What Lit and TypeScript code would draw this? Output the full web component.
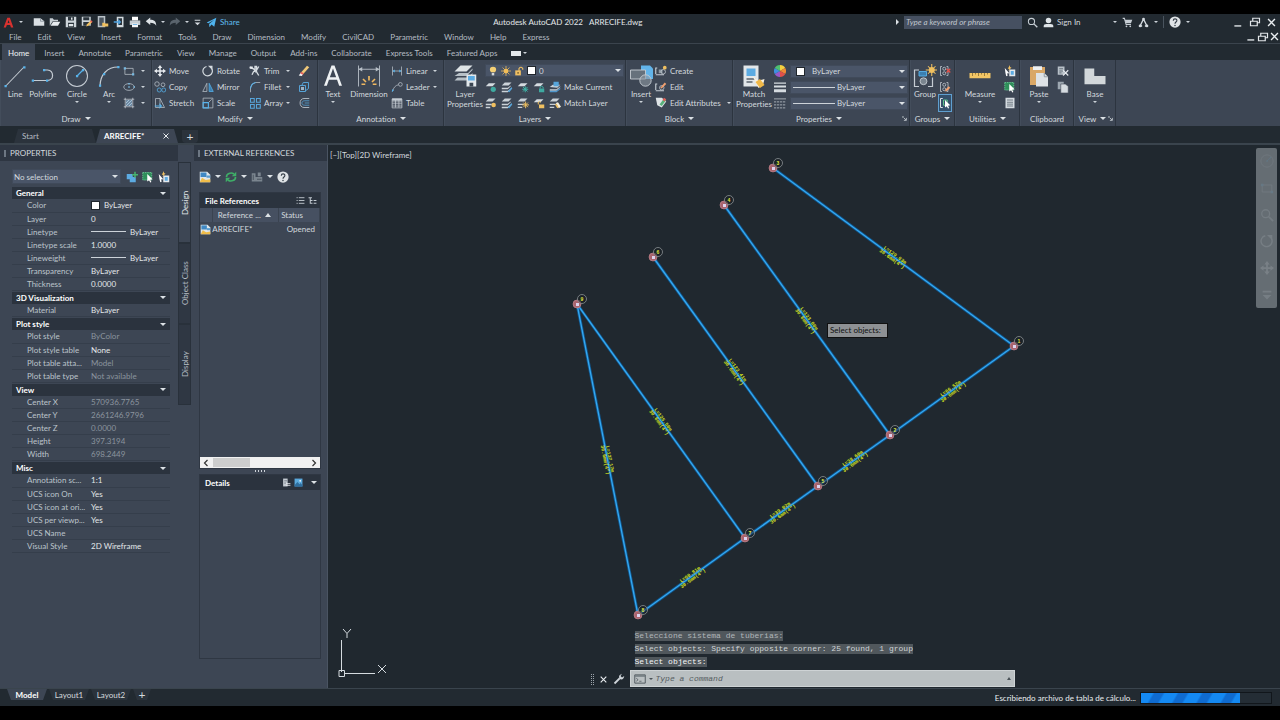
import { LitElement, html, svg, css, nothing, type TemplateResult, type SVGTemplateResult } from "lit";
import { customElement, property } from "lit/decorators.js";

const glyphs: Record<string, SVGTemplateResult> = {
  logo: svg`<path d="M2 14 6.500 2h3.200L14 14h-3l-1-3H6l-1.200 3z M7 8.500h2.200L8 5z" fill="#d8322f" fill-rule="evenodd"/>`,
  blank: svg`<path d="M1 3h9l5 4v6H1z" fill="#d9dfe3"/><path d="M10 3v4h5" fill="none" stroke="#7d8891"/>`,
  open: svg`<path d="M1 13V3h4l1.500 2H12v2H5z" fill="#c9d0d5"/><path d="m2 13 3.500-5.500H15L12 13z" fill="#e7ebee"/>`,
  save: svg`<path d="M1 1h14v14H1z" fill="#cdd4d9"/><path d="M4 1h8v5H4zM4 9h8v6H4z" fill="#2b343c"/><path d="M8 2h2v3H8zM5 10.500h6v3H5z" fill="#dfe5e8"/>`,
  saveas: svg`<path d="M1 1h12v12H1z" fill="#cdd4d9"/><path d="M3 1.500h8v4H3zM3 8h8v5H3z" fill="#2b343c"/><path d="m7 14 1-3 5-5 2 2-5 5z" fill="#f0c060"/><path d="m12 7 1.500-1.500 2 2L14 9z" fill="#e0605a"/>`,
  cloudopen: svg`<path d="M2 1h8v13H2z" fill="#4b555f" stroke="#b9c1c7" stroke-width="2"/><path d="M7 9h3l1 1h4v4H7z" fill="#f0c060"/>`,
  mobile: svg`<path d="M5 1h9v14H5z" fill="#d3dade"/><path d="M7 3h5v9H7z" fill="#2b343c"/><path d="M1 7h6V4l4 4-4 4V9H1z" fill="#4fa3df"/>`,
  print: svg`<path d="M4 1h8v5H4z" fill="#fff"/><path d="M1 6h14v6H1z" fill="#c4ccd2"/><path d="M4 10h8v5H4z" fill="#f4f7f9"/><path d="M5 11h6v1H5z" fill="#4fa3df"/>`,
  undo: svg`<path d="M1 7 7 2v3c5 0 8 2 8 8-2-3-4-4-8-4v3z" fill="#dde2e6"/>`,
  redo: svg`<path d="M15 7 9 2v3c-5 0-8 2-8 8 2-3 4-4 8-4v3z" fill="#59636c"/>`,
  custom: svg`<path d="M3 3h10v2H3zM3 8h10l-5 5z" fill="#d5dbe0"/>`,
  share: svg`<path d="M1 8 15 1l-3 13-4-3-3 4-.500-5L12 4 3.500 9z" fill="#4fb3ee"/>`,
  find: svg`<circle cx="6.500" cy="6.500" r="4.500" fill="none" stroke="#c7ced4" stroke-width="1.500"/><path d="m10 10 5 5" stroke="#c7ced4" stroke-width="2"/>`,
  user: svg`<circle cx="8" cy="5" r="4" fill="#dfe4e8"/><path d="M1 15v-2q0-3 4-3h6q4 0 4 3v2z" fill="#dfe4e8"/>`,
  cart: svg`<path d="M1 2h2.500L6 11h7" fill="none" stroke="#c7ced4" stroke-width="1.500"/><path d="M4 4h11l-2 5H5.500z" fill="#c7ced4"/><circle cx="6.500" cy="13.500" r="1.300" fill="#c7ced4"/><circle cx="12" cy="13.500" r="1.300" fill="#c7ced4"/>`,
  adesk: svg`<path d="M8 3 3 13h3M8 3l5 10h-3" fill="none" stroke="#d5dbe0" stroke-width="2"/><circle cx="8" cy="3" r="2" fill="#d5dbe0"/><circle cx="3" cy="13" r="2" fill="#d5dbe0"/><circle cx="13" cy="13" r="2" fill="#d5dbe0"/>`,
  help: svg`<circle cx="8" cy="8" r="7.500" fill="#dfe3e6"/><path d="M5.700 6.200C5.700 3 10.500 3 10.500 6c0 2-2.500 2-2.500 4.200" fill="none" stroke="#343d47" stroke-width="1.500"/><circle cx="8" cy="12.500" r="1" fill="#343d47"/>`,
  min: svg`<path d="M2 12h10v2H2z" fill="#e3e7ea"/>`,
  rest: svg`<path d="M2 7h9v6H2zM5 7V3h9v6h-3" fill="none" stroke="#e3e7ea" stroke-width="1.600"/>`,
  close: svg`<path d="m3 3 10 10M13 3 3 13" stroke="#e9edf0" stroke-width="2"/>`,
  launch: svg`<path d="M2 2h3M2 2v3M5 5l8 8M14 6v8H6" fill="none" stroke="#cdd3d9" stroke-width="2.500"/>`,
  prev: svg`<path d="M11 2 5 8l6 6" fill="none" stroke="#333" stroke-width="2.400"/>`,
  next: svg`<path d="m5 2 6 6-6 6" fill="none" stroke="#333" stroke-width="2.400"/>`,
  line: svg`<path d="M2 14.500 14 2" stroke="#c5ccd3" stroke-width=".7"/><path d="M1 14h1.500v1.500H1zM13.500 1.500H15V3h-1.500z" fill="#57b2ea"/>`,
  pline: svg`<path d="M1 11h10c4.500 0 4.500-6.500 0-7H9" fill="none" stroke="#c5ccd3" stroke-width=".8"/><path d="M.500 10.300H2v1.500H.500zM8 3.300h1.500v1.500H8zM10 10.300h1.500v1.500H10z" fill="#57b2ea"/>`,
  circle: svg`<circle cx="8" cy="8" r="7" fill="none" stroke="#c5ccd3" stroke-width=".7"/><path d="m8 8 4-4" stroke="#57b2ea" stroke-width=".8"/><path d="M7.300 7.300h1.500v1.500H7.300zM11.300 3.300h1.500v1.500h-1.500z" fill="#57b2ea"/>`,
  arc: svg`<path d="M2 15C2 7 7 2 14 2" fill="none" stroke="#c5ccd3" stroke-width=".8"/><path d="M1.300 13.700h1.500v1.500H1.300zM4 6h1.500v1.500H4zM13.500 1.300H15v1.500h-1.500z" fill="#57b2ea"/>`,
  rect: svg`<path d="M2.500 4.500h11v8h-11z" fill="none" stroke="#b8c0c8"/><path d="M1 3h3v3H1zM12 11h3v3h-3z" fill="#78b8e0"/>`,
  ellipse: svg`<ellipse cx="8" cy="8" rx="7" ry="4.500" fill="none" stroke="#b8c0c8"/><path d="M7 7h2v2H7zM7 2.500h2v2H7zM14 7h2v2h-2z" fill="#78b8e0"/>`,
  hatch: svg`<path d="M3 1v14M13 1v14M1 3h14M1 13h14" stroke="#c5ccd3"/><path d="M4 4h8v8H4z" fill="#6e8aa3"/><path d="m4 8 4-4m-4 8 8-8m-4 8 4-4" stroke="#b9d2e6"/>`,
  move: svg`<path d="M8 0 5 4h2v3H4V5L0 8l4 3V9h3v3H5l3 4 3-4H9V9h3v2l4-3-4-3v2H9V4h2z" fill="#e6eaee"/>`,
  copy: svg`<circle cx="4" cy="4" r="3" fill="none" stroke="#b8c0c8"/><circle cx="12" cy="5" r="2.500" fill="none" stroke="#b8c0c8"/><circle cx="7" cy="12" r="2.700" fill="none" stroke="#57b2ea"/><circle cx="13" cy="12" r="2.700" fill="none" stroke="#57b2ea"/>`,
  stretch: svg`<path d="M2 2h6v12H2zM8 2l6 12H8" fill="none" stroke="#b8c0c8"/><path d="M1 12h9l-3-3m3 3-3 3" fill="none" stroke="#57b2ea" stroke-width="1.400"/>`,
  rotate: svg`<path d="M6 2a6.300 6.300 0 1 0 7 3" fill="none" stroke="#d5dbe0" stroke-width="1.600"/><path d="M8 1h6v6z" fill="#d5dbe0"/>`,
  mirror: svg`<path d="M6.500 3v11H1z" fill="none" stroke="#b8c0c8"/><path d="M9.500 3v11H15z" fill="#3c7fb0" stroke="#57b2ea"/>`,
  scale: svg`<path d="M1.500 1.500h13v13h-13z" fill="none" stroke="#b8c0c8"/><path d="M1.500 7.500h7v7h-7z" fill="none" stroke="#57b2ea" stroke-width="1.500"/><path d="m9 7 4-4" stroke="#b8c0c8"/>`,
  trim: svg`<path d="m1 3 5 2 2 3v-6h2v7l3 5M13 2l-3 5-4 2-2 4" fill="none" stroke="#d5dbe0" stroke-width="1.800"/><path d="M1 2h4v3H1z" fill="#e6eaee"/>`,
  fillet: svg`<path d="M2 15V9q1-6 7-7h6" fill="none" stroke="#b8c0c8"/><path d="M2 10q1-7 7-8" fill="none" stroke="#57b2ea" stroke-width="1.500"/>`,
  array: svg`<path d="M2 2h5v5H2zM10 2h5v5h-5zM2 10h5v5H2zM10 10h5v5h-5z" fill="none" stroke="#57a5da" stroke-width="1.400"/>`,
  erase: svg`<path d="M4 10 12 1l3 2-8 9z" fill="#f0c878"/><path d="m1 14 3-4 3 2-2 2.500z" fill="#f3f4f5"/><path d="m4 9-1 2 3 2 2-2z" fill="#e0605a"/>`,
  explode: svg`<path d="M2 6h8v8H2zM5 6l2-4h7v8l-4 3" fill="none" stroke="#57a5da" stroke-width="1.300"/><path d="M4 8h4v4H4z" fill="#9fb3c4"/>`,
  offset: svg`<path d="M15 2H8C1 2 1 14 8 14h7" fill="none" stroke="#b8c0c8" stroke-width="1.200"/><path d="M15 5H9C4 5 4 11 9 11h6M15 8H9" fill="none" stroke="#57a5da"/>`,
  text: svg`<path d="M2 14.500 7 1h2l5 13.500h-1.900l-1.400-4H5.300l-1.400 4z M5.900 8.800h4.200L8 3z" fill="#eef1f3" fill-rule="evenodd"/>`,
  dim: svg`<path d="M1 1v14M15 1v14M1.500 3.500h13" stroke="#b8c0c8" stroke-width=".6"/><path d="M1 3.500 3.500 2v3zM15 3.500 12.500 2v3z" fill="#b8c0c8"/><path d="m8 8v3m-4-1 2 2m6-2-2 2M3 13.500h2.500m5 0H13" stroke="#f0b860" stroke-width="1.100"/>`,
  linear: svg`<path d="M2 2v12M14 2v12M2 8h12" stroke="#b8c0c8"/><path d="M2 8 5 6v4zM14 8l-3-2v4z" fill="#57b2ea"/>`,
  leader: svg`<path d="M2 14Q4 6 10 5" fill="none" stroke="#b8c0c8"/><circle cx="12.500" cy="4.500" r="2.500" fill="none" stroke="#b8c0c8"/><path d="m1 15 .500-4L4 12z" fill="#57b2ea"/>`,
  table: svg`<path d="M1.500 2.500h13v12h-13zM1.500 6.500h13M1.500 9h13M1.500 12h13M6 4v10M10.500 4v10" fill="none" stroke="#c5ccd3"/><path d="M1.500 2h13v3h-13z" fill="#c5ccd3"/>`,
  layers: svg`<path d="m1 5 4-4h8l-4 4z" fill="#dfe4e7"/><path d="m1 8 3-2h6l3-3v1L9 8zM1 11l2-2h7l3-3v1l-4 4z" fill="#b7c0c7"/><path d="M9 7h6.500v8H9z" fill="#e3e8ec"/><path d="M10 8h4.500v3H10z" fill="#5cabe2"/><path d="M11 12.500h2.500V15H11z" fill="#3b4653"/>`,
  bulb: svg`<path d="M8 1C2 1 2 7 5 10h6c3-3 3-9-3-9z" fill="#f3cf75"/><path d="M6 11h4v4H6z" fill="#d3d7da"/>`,
  sun: svg`<circle cx="8" cy="8" r="3.800" fill="#f1bd58"/><path d="M8 0v16M0 8h16M2.500 2.500l11 11M13.500 2.500l-11 11" stroke="#f1bd58" stroke-width="1.200"/>`,
  lock: svg`<path d="M8 8V4q3-4 6 0v2" fill="none" stroke="#efbf62" stroke-width="1.800"/><path d="M2 7h9v8H2z" fill="#efbf62"/><path d="M5.500 9.500h2v3h-2z" fill="#6b562a"/>`,
  lay1: svg`<path d="m1 7 4-4h9l-4 4z" fill="#d5dbe0"/><circle cx="11" cy="11" r="3.500" fill="#3fa9a0"/>`,
  lay2: svg`<path d="m1 6 4-4h9l-4 4zM1 9h8l4-3v1l-4 4H1zM1 13h8l4-3v1l-4 4H1z" fill="#cbd2d8"/><path d="m9 14 5-6 1 2-4 5z" fill="#57a5da"/>`,
  lay3: svg`<path d="m1 7 4-4h9l-4 4z" fill="#d5dbe0"/><path d="M11 7v8M7 11h8M8 8l6 6M14 8l-6 6" stroke="#3fb3a8" stroke-width="1.300"/>`,
  lay4: svg`<path d="m1 7 4-4h9l-4 4z" fill="#d5dbe0"/><path d="M8 10h7v5H8z" fill="#3fa9a0"/><path d="M9.500 10V8q2-2 4 0v2" fill="none" stroke="#3fa9a0" stroke-width="1.300"/>`,
  current: svg`<path d="m1 8 4-3h10l-4 4zM1 11h9l5-4v1l-5 5H1z" fill="#cbd2d8"/><path d="M6 1h7v6H6z" fill="#57a5da"/><path d="M1 13h9l5-4v2l-5 4H1z" fill="#4f97cc"/>`,
  lay5: svg`<path d="m1 6 4-4h9l-4 4zM1 9h8v2H1zM1 13h6v2H1z" fill="#cbd2d8"/><circle cx="11.500" cy="10.500" r="3" fill="#f0c060"/>`,
  lay6: svg`<path d="m1 6 4-4h9l-4 4zM1 9h8v1.500H1zM1 13h6v1.500H1z" fill="#cbd2d8"/><path d="M11.500 6v9M7 10.500h9M8.500 7.500l6 6M14.500 7.500l-6 6" stroke="#f0c060" stroke-width="1.300"/>`,
  lay7: svg`<path d="m1 7 4-4h9l-4 4z" fill="#d5dbe0"/><path d="M8 10h7v5H8z" fill="#f0c060"/><path d="M7 10V7q2-2 3.500 0" fill="none" stroke="#f0c060" stroke-width="1.300"/>`,
  match: svg`<path d="m1 6 4-4h9l-4 4zM1 9h8v1.500H1zM1 13h6v1.500H1z" fill="#cbd2d8"/><path d="m9 8 3-1 4 6-3 2z" fill="#f4eedd"/><path d="m8 10 2-1 3 5-2 1z" fill="#f0c060"/>`,
  insert: svg`<path d="M8 1h6l2 2v7H8z" fill="#62b4ea"/><path d="M1 4h10v6H1z" fill="#66717c" stroke="#c5ccd3" stroke-width=".6"/><circle cx="11" cy="11" r="3.800" fill="#8f9aa4" fill-opacity=".6" stroke="#c5ccd3" stroke-width=".6"/>`,
  create: svg`<path d="M1 12V4h2m-2 9h11" fill="none" stroke="#c5ccd3" stroke-width="1.500"/><path d="M5 6h5v5H5z" fill="#8d98a2"/><circle cx="11" cy="9" r="3" fill="none" stroke="#c5ccd3"/><circle cx="13" cy="3.500" r="2.500" fill="#f0c060"/>`,
  bedit: svg`<path d="M1 12V4h2m-2 9h11" fill="none" stroke="#c5ccd3" stroke-width="1.500"/><circle cx="9" cy="9" r="3" fill="none" stroke="#c5ccd3"/><path d="m7 9 6-7 2 2-6 6z" fill="#f0a070"/>`,
  attr: svg`<path d="M1 1h8l6 5-6 8-6-3z" fill="#dfe4e7"/><path d="m6 10 6-8 3 2-6 8z" fill="#57b27a"/><path d="m10 4 2-3 3 2-2 3z" fill="#e0605a"/>`,
  matchp: svg`<path d="M1 1h10v14H1z" fill="#e2e6e9"/><path d="M3 3h6v5H3z" fill="#5cabe2"/><path d="M3 10h6M3 12h4" stroke="#59636c"/><path d="m7 8 4 3 4-1-1 4-3 2z" fill="#f6f0e2"/><path d="m9 12 3-2 3 4-3 2z" fill="#f0b848"/>`,
  wheel: svg`<path d="M8 8V0a8 8 0 0 1 7 4z" fill="#f4d03f"/><path d="m8 8 7-4a8 8 0 0 1 0 8z" fill="#f08a34"/><path d="m8 8 7 4a8 8 0 0 1-7 4z" fill="#e0504a"/><path d="M8 8v8a8 8 0 0 1-7-4z" fill="#9a58c8"/><path d="m8 8-7 4a8 8 0 0 1 0-8z" fill="#3f8fe0"/><path d="M8 8 1 4a8 8 0 0 1 7-4z" fill="#4fc070"/>`,
  weights: svg`<path d="M0 2h16v1.500H0zM0 6h16v2.500H0zM0 11h16v4H0z" fill="#d5dbe0"/>`,
  types: svg`<path d="M0 2.500h16" stroke="#c5ccd3"/><path d="M0 6.500h16M0 10.500h16M0 14.500h16" stroke="#c5ccd3" stroke-dasharray="3 1"/>`,
  group: svg`<path d="M4 4H1v11h3M10 15h3V9" fill="none" stroke="#c5ccd3" stroke-width=".8"/><path d="M4 5h5v3H4z" fill="#3c7fb0" stroke="#57b2ea" stroke-width=".6"/><circle cx="7" cy="11.500" r="2.300" fill="#7a858f" stroke="#c5ccd3" stroke-width=".6"/><circle cx="12.500" cy="4" r="2" fill="#f0c060"/><path d="M12.500 0v8M8.500 4h8M10 1.500l5 5M15 1.500l-5 5" stroke="#f0c060" stroke-width=".7"/>`,
  ungroup: svg`<path d="M4 2H2v12h2M10 2h2v12h-2" fill="none" stroke="#c5ccd3"/><circle cx="7" cy="5" r="2" fill="none" stroke="#c5ccd3"/><circle cx="7" cy="11" r="2" fill="none" stroke="#c5ccd3"/><path d="m10 5 5 5m0-5-5 5" stroke="#e0504a" stroke-width="1.800"/>`,
  gedit: svg`<path d="M4 2H2v12h2M10 2h2v12h-2" fill="none" stroke="#c5ccd3"/><circle cx="7" cy="5" r="2" fill="none" stroke="#c5ccd3"/><circle cx="7" cy="11" r="2" fill="none" stroke="#c5ccd3"/><path d="m8 14 1-3 4-4 2 2-4 4z" fill="#f0a070"/>`,
  gsel: svg`<path d="M5 2H2v12h3" fill="none" stroke="#e3e7ea" stroke-width="1.300"/><path d="M6 4h5v7H6z" fill="none" stroke="#5fc48a" stroke-width="1.300"/><path d="m8 4 7 7-3 .500 1.500 3-1.500.700-1.500-3L8 14z" fill="#fff"/>`,
  measure: svg`<path d="M1 6h14v3.500H1z" fill="#f2c565"/><path d="M3 6v2M5 6v1M7 6v2M9 6v1M11 6v2M13 6v1" stroke="#7d6430" stroke-width=".5"/>`,
  qsel: svg`<path d="M7 6h8v9H7z" fill="#e3e8ec"/><path d="M9 8h4v5H9z" fill="#5cabe2"/><path d="m1 4 6 7-3 .300L5 14l-2 1-1-4z" fill="#fff"/><path d="m8 0-3 5h2L6 8l4-5H8z" fill="#f0c060"/>`,
  selall: svg`<path d="M1 2h12v10H1z" fill="#2f8f5a" stroke="#6fd39b" stroke-dasharray="2 1"/><path d="m7 4 7 7-3 .500 1.500 3-1.500.700-1.500-3L7 14z" fill="#fff"/>`,
  calc: svg`<path d="M2 1h12v14H2z" fill="#d5dbe0"/><path d="M4 4h8M4 7h8M4 9.500h8M4 12h8" stroke="#525d68"/>`,
  paste: svg`<path d="M2 2h10v12H2z" fill="#d9a766"/><path d="M4 1.500h6v2.500H4z" fill="#eef1f3"/><path d="M6 6h5.500L14 8.500V15H6z" fill="#dde2e6"/><path d="M11.500 6v2.500H14" fill="none" stroke="#8a949d" stroke-width=".6"/>`,
  cut: svg`<path d="M1 2h9v11H1z" fill="#b8c0c8"/><path d="M3 5h5M3 8h5M3 10.500h3" stroke="#4a5562"/><path d="m8 7 7 7m0-7-7 7" stroke="#e6eaee" stroke-width="1.500"/>`,
  pages: svg`<path d="M1 1h8v10H1z" fill="#9da7b0"/><path d="M5 4h6l4 3v9H5z" fill="#d5dbe0" stroke="#3c4552" stroke-width=".8"/>`,
  base: svg`<path d="M1 3h6.500v5H15v5.500H1z" fill="#d2d7da"/>`,
  addsel: svg`<path d="M1 4h8v7H1zM5 8h8v7H5z" fill="#5cabe2"/><path d="M11 1h2v3h3v2h-3v3h-2V6H8V4h3z" fill="#47b56f"/>`,
  dwg: svg`<path d="M1 1h10l4 4v10H1z" fill="#dfe6ea"/><path d="M2 2h8v6H2z" fill="#3f88c4"/><path d="M10 6h5v3h-5z" fill="#5b9dd0"/><path d="M1 15 4 9l5 3 6-1v4z" fill="#f0bd4a"/>`,
  sync: svg`<path d="M2 8a6 5 0 0 1 10-4M14 8a6 5 0 0 1-10 4" fill="none" stroke="#3fae68" stroke-width="2.200"/><path d="M15 1v6H9zM1 15V9h6z" fill="#3fae68"/>`,
  path: svg`<path d="M1 3h5v11H1zM6 8h9v6H6zM9 2h4v5H9z" fill="#7b858f"/><path d="M3 5v7M8 11h6" stroke="#3c4552"/>`,
  list: svg`<path d="M1 3h2M5 3h10M1 8h2M5 8h10M1 13h2M5 13h10" stroke="#c5ccd3" stroke-width="1.600"/>`,
  tree: svg`<path d="M1 3h6M4 3v10h4M4 8h4M10 8h5M10 13h5" stroke="#c5ccd3" stroke-width="1.800" fill="none"/>`,
  detail: svg`<path d="M2 1h8v14H2z" fill="#c5ccd3"/><path d="M4 5h5M4 9h3" stroke="#3c4552"/><path d="M7 10h8M7 13h8" stroke="#e6eaee" stroke-width="1.500"/>`,
  preview: svg`<path d="M1 1h14v14H1z" fill="#5aa9dc"/><path d="m1 13 5-6 4 4 2-2 3 4v2H1z" fill="#2f6f9f"/><circle cx="11" cy="5" r="1.500" fill="#fff"/>`,
  wrench: svg`<path d="m2 14 7-7" stroke="#cfd5da" stroke-width="2.400"/><path d="M9 8Q6 3 12 1l-2 3 2 2 3-2q-1 6-6 4z" fill="#cfd5da"/>`,
  prompt: svg`<path d="M1 2.500h14v11H1z" fill="none" stroke="#4a5258" stroke-width="1.200"/><path d="M1 3h14v2H1z" fill="#6f787e"/><path d="m3 7 2.500 2L3 11M7 11h3" fill="none" stroke="#4a5258"/>`,
};

const icon = (name: string, size = 12) =>
  html`<svg class="icon" width=${size} height=${size} viewBox="0 0 16 16" aria-hidden="true">${glyphs[name]}</svg>`;
const caret = html`<span class="caret"></span>`;
const dot = html`<span class="caret small"></span>`;

const shared = css`
  :host, * { box-sizing: border-box; }
  button, select, input { font: inherit; color: inherit; background: none; border: 0; padding: 0; margin: 0; border-radius: 0; outline: none; }
  button { display: flex; align-items: center; white-space: nowrap; text-align: left; }
  select { appearance: none; cursor: pointer; }
  .icon { display: block; flex: none; }
  .caret { flex: none; display: block; width: 0; height: 0; border: 3px solid transparent; border-top: 3px solid #dce1e5; border-bottom: 0; }
  .caret.small { border-width: 2px 2px 0; border-top-color: #cdd3d9; }
`;

@customElement("ribbon-panel")
class RibbonPanel extends LitElement {
  @property() label = "";
  @property({ type: Boolean }) plain = false;
  @property({ type: Boolean }) launcher = false;
  static styles = [shared, css`
    :host { display: flex; flex-direction: column; flex: none; padding-top: 3px; border-right: 1px solid #2c343f; border-left: 1px solid #434d5b; }
    .body { height: 48px; display: flex; }
    .title { display: flex; align-items: center; height: 15px; padding: 0 2px; }
    .name { flex: 1; display: flex; align-items: center; justify-content: center; gap: 4px; font-variant-ligatures: none; }
  `];
  render() {
    return html`<div class="body"><slot></slot></div>
      <div class="title"><button class="name">${this.label}${this.plain ? nothing : caret}</button>
      ${this.launcher ? html`<button aria-label="${this.label} settings">${icon("launch", 5)}</button>` : nothing}</div>`;
  }
}

@customElement("pipe-drawing")
class PipeDrawing extends LitElement {
  static styles = css`
    :host { display: block; }
    svg { display: block; width: 100%; min-width: 952px; height: 543px; }
    .glow { stroke: #0b66ad; stroke-width: 3; opacity: .75; }
    .pipe { stroke: #35a9f2; stroke-width: 1.3; }
    .tag { font: bold 5px "Liberation Mono", monospace; fill: #d4e021; text-anchor: middle; }
    .num { font: bold 5px "Liberation Sans", sans-serif; fill: #e4ea3c; text-anchor: middle; }
    .ring { fill: #151b1f; stroke: #8b9296; stroke-width: .8; }
    .node { fill: #a9646e; stroke: #c98b93; stroke-width: .6; }
  `;
  nodes = [
    [773, 168, "3"], [724, 205, "4"], [653, 257, "6"], [577, 304, "9"], [1014, 346, "1"],
    [890, 435, "2"], [818, 486, "5"], [745, 538, "7"], [638, 615, "8"],
  ] as [number, number, string][];
  pipes = [
    [0, 4, "L=129.93m"], [1, 5, "L=123.00m"], [2, 6, "L=122.41m"], [3, 7, "L=125.50m"], [3, 8, "L=137.17m"],
    [8, 7, "L=60.81m"], [7, 6, "L=39.02m"], [6, 5, "L=38.60m"], [5, 4, "L=66.52m"],
  ] as [number, number, string][];
  render() {
    const seg = this.pipes.map(([a, b, t]) => {
      const [x1, y1] = this.nodes[a], [x2, y2] = this.nodes[b];
      return { x1, y1, x2, y2, t, mx: (x1 + x2) / 2, my: (y1 + y2) / 2, deg: (Math.atan2(y2 - y1, x2 - x1) * 180) / Math.PI };
    });
    return html`<svg viewBox="328 145 952 543" preserveAspectRatio="xMinYMin meet" role="img" aria-label="Pipe network">
      ${seg.map((s) => svg`<line class="glow" x1=${s.x1} y1=${s.y1} x2=${s.x2} y2=${s.y2} /><line class="pipe" x1=${s.x1} y1=${s.y1} x2=${s.x2} y2=${s.y2} />`)}
      ${seg.map((s) => svg`<g transform="translate(${s.mx} ${s.my}) rotate(${s.deg})"><text class="tag" y="-1">${s.t}</text><text class="tag" y="4">30.6mm(4")</text></g>`)}
      ${this.nodes.map(([x, y, n]) => svg`<circle class="node" cx=${x} cy=${y} r="4" /><rect x=${x - 1} y=${y - 1} width="3" height="3" fill="#dcd3ee" />
        <circle class="ring" cx=${x + 5} cy=${y - 5} r="4.500" fill-opacity=".5" /><text class="num" x=${x + 5} y=${y - 3}>${n}</text>`)}
    </svg>`;
  }
}

const big = (cls: string, ic: string, lines: string[], drop = true): TemplateResult =>
  html`<button class="big ${cls}">${icon(ic, 24)}${lines.map((l) => html`<span>${l}</span>`)}${drop ? dot : nothing}</button>`;
const tool = (ic: string, label = "", drop = false) =>
  html`<button class="tool" aria-label=${label || ic}>${icon(ic)}${label ? html`<span>${label}</span>` : nothing}${drop ? dot : nothing}</button>`;

type Row = [string, string, string?];
const sections: [string, Row[]][] = [
  ["General", [["Color", "ByLayer", "swatch"], ["Layer", "0"], ["Linetype", "ByLayer", "rule"], ["Linetype scale", "1.0000"], ["Lineweight", "ByLayer", "rule"], ["Transparency", "ByLayer"], ["Thickness", "0.0000"]]],
  ["3D Visualization", [["Material", "ByLayer"]]],
  ["Plot style", [["Plot style", "ByColor", "dim"], ["Plot style table", "None"], ["Plot table atta...", "Model", "dim"], ["Plot table type", "Not available", "dim"]]],
  ["View", [["Center X", "570936.7765", "dim"], ["Center Y", "2661246.9796", "dim"], ["Center Z", "0.0000", "dim"], ["Height", "397.3194", "dim"], ["Width", "698.2449", "dim"]]],
  ["Misc", [["Annotation sc...", "1:1"], ["UCS icon On", "Yes"], ["UCS icon at ori...", "Yes"], ["UCS per viewp...", "Yes"], ["UCS Name", ""], ["Visual Style", "2D Wireframe"]]],
];

@customElement("app-root")
class AppRoot extends LitElement {
  static styles = [shared, css`
    :host { display: flex; flex-direction: column; min-height: 100vh; padding: 14px 0; background: #000; color: #d3d9de; font: 8px/10px Lato, "Open Sans", sans-serif; overflow: hidden; }
    * { font-variant-ligatures: none; }
    .bar, .group { display: flex; align-items: center; }
    .titlebar { height: 16px; background: #222a31; justify-content: space-between; padding: 0 3px 0 2px; }
    .quick { gap: 4px; }
    .quick .logo { gap: 4px; margin-right: 6px; }
    .share { gap: 3px; color: #5fbdf0; }
    .doc { gap: 6px; color: #e3e7ea; }
    .info { gap: 5px; }
    .info .search { width: 118px; height: 13px; background: #465061; padding: 0 2px; font-style: italic; }
    .search::placeholder, .cmd::placeholder { color: inherit; opacity: 1; }
    .info .search::placeholder { color: #c0c7ce; }
    .play { width: 0; height: 0; border: 3px solid transparent; border-left: 3px solid #dce1e5; border-right: 0; }
    .signin { gap: 3px; width: 74px; }
    .signin .caret { margin-left: auto; }
    .rule-v { width: 1px; height: 12px; background: #4a545e; }
    .win { gap: 5px; }
    .app-win { margin-left: 38px; }
    .menubar { height: 14px; background: #222a31; border-bottom: 1px solid #3b444d; justify-content: space-between; padding: 0 0 0 9px; color: #b5bcc3; }
    .menus { display: flex; gap: 16px; }
    .tabs { height: 16px; background: #222a31; color: #b5bcc3; padding-left: 2px; align-items: stretch; }
    .tabs button { padding: 2px 7px 0; }
    .tabs .on { background: #3d4654; color: #f0f3f5; padding: 2px 6px 0; margin-right: 2px; }
    .chip { width: 10px; height: 5px; background: #e3e7ea; margin-right: 2px; }
    .ribbon { display: flex; height: 66px; background: #3d4654; overflow: hidden; }
    .big { flex-direction: column; justify-content: flex-start; padding-top: 1px; flex: none; text-align: center; }
    .big .icon { margin-bottom: 1px; }
    .big span { display: block; line-height: 10px; }
    .big span.caret { margin-top: 2px; line-height: 0; }
    .w24 { width: 24px; } .w28 { width: 28px; } .w36 { width: 36px; }
    .w40 { width: 40px; } .w44 { width: 44px; } .w48 { width: 48px; }
    .col { display: grid; grid-template-rows: repeat(3, 16px); align-content: start; flex: none; }
    .col.grow { flex: 1; min-width: 0; }
    .tool { gap: 3px; height: 16px; }
    .tool > .caret { margin-left: 3px; }
    .pair { margin-left: 2px; }
    .c-move { width: 48px; margin-left: 1px; } .c-rot { width: 47px; } .c-trim { width: 49px; }
    .spread .tool > .caret { margin-left: auto; margin-right: 8px; }
    .row { display: flex; align-items: center; gap: 4px; }
    .field { display: flex; align-items: center; gap: 3px; height: 13px; margin: 1px 0; background: #4a5568; border: 1px solid #404a5a; padding: 0 2px; }
    .ribbon .field { flex: 1; min-width: 0; margin-right: 1px; }
    .row .field { gap: 2px; }
    .row .field .white { margin: 0 5px 0 3px; }
    .field select { flex: 1; min-width: 0; height: 11px; }
    .field .caret { pointer-events: none; }
    .white { flex: none; width: 9px; height: 9px; background: #fff; border: 1px solid #20262c; }
    .stroke { flex: none; height: 1px; background: #cdd3d9; }
    .stroke.ribbon-line { width: 42px; }
    .pressed { background: #34506b; box-shadow: 0 0 0 1px #5f9fd0; }
    .files { height: 17px; background: #222a31; align-items: flex-end; padding-left: 14px; }
    .file { width: 82px; height: 14px; padding: 0 8px; background: #2b333c; clip-path: polygon(4px 0, calc(100% - 4px) 0, 100% 100%, 0 100%); justify-content: space-between; color: #b5bcc3; }
    .file.on { background: #3d4654; color: #fff; font-weight: bold; }
    .plus { width: 16px; height: 13px; justify-content: center; font-size: 12px; background: #2b333c; border-radius: 0 0 4px 4px; margin-left: 4px; }
    .main { flex: 1; display: flex; min-height: 0; border-top: 2px solid #3a444d; background: #20282f; }
    .side { flex: none; display: flex; background: #3d4654; }
    .palette { display: flex; flex-direction: column; }
    .props { width: 178px; }
    .xrefs { width: 136px; padding-left: 2px; border-right: 1px solid #4a5462; }
    .head { height: 16px; flex: none; display: flex; align-items: center; gap: 4px; padding-left: 4px; background: #2e3642; font-size: 8px; color: #d3d9de; margin: 0; font-weight: normal; }
    .grip { width: 2px; height: 7px; background: #6d7783; }
    .props-body { padding: 8px 8px 0 12px; }
    .picker { display: grid; grid-template-columns: 109px 1fr; align-items: center; gap: 5px; height: 15px; margin-bottom: 3px; }
    .picker .icons { display: flex; gap: 4px; }
    .picker .field { padding: 0 2px 0 1px; height: 15px; margin: 0; }
    .props-table { width: 158px; border-collapse: collapse; table-layout: fixed; margin-bottom: 1px; }
    .key { width: 76px; }
    .props-table th, .props-table td { padding: 0; text-align: left; font-weight: normal; white-space: nowrap; overflow: hidden; }
    .props-table thead th { height: 12px; background: #2b333e; color: #fff; font-weight: bold; padding-left: 4px; }
    .sec { display: flex; justify-content: space-between; align-items: center; padding-right: 4px; }
    .props-table tbody th { padding-left: 15px; border-bottom: 1px solid #353e4b; height: 13px; color: #bcc4cb; }
    .props-table tbody td { padding-left: 3px; border-bottom: 1px solid #353e4b; }
    .props-table .val { display: flex; align-items: center; gap: 4px; color: #e3e7ea; }
    .props-table .val.dim { color: #8b949e; }
    .val .stroke { width: 35px; }
    .vtabs { width: 14px; padding-top: 17px; }
    .vtabs button { width: 13px; height: 81px; writing-mode: vertical-rl; transform: rotate(180deg); justify-content: center; background: #2f3743; border: 1px solid #29313b; color: #b5bcc3; }
    .vtabs .on { background: #3d4654; color: #e3e7ea; }
    .strip { display: flex; align-items: center; gap: 4px; height: 31px; padding-left: 5px; }
    .box { margin: 0 6px 0 5px; border: 1px solid #2f3743; display: flex; flex-direction: column; }
    .box-head { height: 15px; display: flex; align-items: center; gap: 3px; padding: 0 3px 0 5px; background: #2b333e; color: #fff; font-weight: bold; flex: none; }
    .box-head .name { flex: 1; }
    .ref-table { width: 100%; border-collapse: collapse; }
    .ref-table th, .ref-table td { font-weight: normal; text-align: left; padding: 0; height: 14px; white-space: nowrap; }
    .ref-table th { background: #465061; border-right: 1px solid #3a4350; }
    .sorted { display: flex; align-items: center; gap: 4px; padding-left: 5px; }
    .up { border: 3px solid transparent; border-bottom: 4px solid #dce1e5; border-top: 0; }
    .list-box { height: 277px; justify-content: space-between; }
    .hscroll { height: 11px; display: flex; align-items: center; gap: 3px; padding: 0 2px; background: #f1f1f1; justify-content: space-between; }
    .thumb { width: 37px; height: 9px; background: #cdcdcd; margin-right: auto; }
    .splitter { align-self: center; width: 12px; height: 2px; margin: 1px 0 2px; background: repeating-linear-gradient(90deg, #cdd3d9 0 1px, transparent 1px 3px); }
    .detail-box { height: 185px; }
    .canvas { flex: 1; min-width: 0; position: relative; }
    .vp { position: absolute; left: 2px; top: 5px; }
    .tip { position: absolute; left: 499px; top: 178px; width: 61px; height: 15px; padding: 1px 2px; border: 1px solid #111; background: #8e9194; color: #111; }
    .ucs { position: absolute; left: 8px; bottom: 8px; }
    .nav { position: absolute; right: 3px; top: 3px; width: 21px; height: 160px; background: #727a80; border-radius: 2px; display: flex; flex-direction: column; align-items: center; justify-content: space-around; opacity: .85; }
    .nav .icon { opacity: .2; }
    .command { position: absolute; inset: auto 0 1px; padding-right: 4px; display: flex; justify-content: center; align-items: flex-end; gap: 5px; font-family: "Liberation Mono", monospace; pointer-events: none; }
    .handle { display: flex; align-items: center; gap: 5px; height: 16px; }
    .dots { width: 4px; height: 11px; background: conic-gradient(#9ba3aa 25%, transparent 0) 0 0 / 2px 2px; }
    .console { width: 385px; display: flex; flex-direction: column; align-items: flex-start; gap: 3px; }
    .log { margin-left: 5px; background: #50575c; color: #b0b6ba; white-space: nowrap; height: 10px; }
    .log.mid { color: #cfd4d7; }
    .log.new { color: #f3f5f6; }
    .prompt { width: 100%; height: 17px; display: flex; align-items: center; gap: 3px; padding: 0 3px; background: #b9bfc1; border: 1px solid #ced3d5; color: #565d62; }
    .cmd { flex: 1; font-style: italic; }
    .prompt .caret { border-top-color: #4a5258; }
    .prompt .up { border-width: 0 2px 3px; border-bottom-color: #4a5258; }
    .status { height: 18px; background: #222a31; border-top: 1px solid #3a444d; justify-content: space-between; padding: 0 8px 0 7px; }
    .sheets { display: flex; align-self: flex-start; gap: 2px; }
    .sheets button { width: 40px; height: 11px; justify-content: center; background: #2b333c; clip-path: polygon(0 0, 100% 0, calc(100% - 4px) 100%, 4px 100%); }
    .sheets .on { background: #3d4654; color: #fff; font-weight: bold; }
    .sheets .add { width: 18px; font-size: 12px; }
    .job { display: flex; align-items: center; gap: 4px; color: #e9edf0; }
    .meter { width: 132px; height: 12px; border: 1px solid #11161b; background: #242d35; }
    .fill { height: 100%; background: repeating-linear-gradient(120deg, #1489f2 0 10px, #0f6bd0 12px 19px, #1489f2 21px); }
  `];

  render() {
    const cb = (label: string) => html`<select aria-label=${label}><option>ByLayer</option></select>${caret}`;
    return html`
      <header class="bar titlebar">
        <div class="group quick">
          <button class="logo" aria-label="Application menu">${icon("logo", 13)}${dot}</button>
          ${["blank", "open", "save", "saveas", "cloudopen", "mobile", "print"].map((n) => html`<button aria-label=${n}>${icon(n)}</button>`)}
          <button aria-label="Undo">${icon("undo")}</button>${dot}
          <button aria-label="Redo">${icon("redo")}</button>${dot}
          <button aria-label="Customize">${icon("custom", 9)}</button>
          <button class="share">${icon("share", 11)}Share</button>
        </div>
        <div class="group doc"><span>Autodesk AutoCAD 2022</span><span>ARRECIFE.dwg</span></div>
        <div class="group info">
          <span class="play"></span>
          <input class="search" placeholder="Type a keyword or phrase" aria-label="Search help" />
          <button aria-label="Search">${icon("find", 11)}</button>
          <button class="signin">${icon("user", 11)}Sign In${dot}</button>
          <button aria-label="App store">${icon("cart", 11)}</button>
          <button aria-label="Autodesk">${icon("adesk", 11)}</button>${dot}
          <span class="rule-v"></span>
          <button aria-label="Help">${icon("help", 12)}</button>${dot}
          <div class="group win app-win"><button aria-label="Minimize">${icon("min", 11)}</button><button aria-label="Restore">${icon("rest", 12)}</button><button aria-label="Close">${icon("close", 11)}</button></div>
        </div>
      </header>
      <nav class="bar menubar">
        <div class="menus">${["File", "Edit", "View", "Insert", "Format", "Tools", "Draw", "Dimension", "Modify", "CivilCAD", "Parametric", "Window", "Help", "Express"].map((m) => html`<button>${m}</button>`)}</div>
        <div class="group"><button aria-label="Minimize drawing">${icon("min", 11)}</button><button aria-label="Restore drawing">${icon("rest", 12)}</button><button aria-label="Close drawing">${icon("close", 11)}</button></div>
      </nav>
      <nav class="bar tabs">
        <button class="on">Home</button>
        ${["Insert", "Annotate", "Parametric", "View", "Manage", "Output", "Add-ins", "Collaborate", "Express Tools", "Featured Apps"].map((m) => html`<button>${m}</button>`)}
        <button aria-label="Ribbon display"><span class="chip"></span>${dot}</button>
      </nav>
      <section class="ribbon" aria-label="Home ribbon">
        <ribbon-panel label="Draw" style="width:152px">
          ${big("w28", "line", ["Line"], false)}${big("w28", "pline", ["Polyline"], false)}${big("w40", "circle", ["Circle"])}${big("w24", "arc", ["Arc"])}
          <div class="col pair">${["rect", "ellipse", "hatch"].map((n) => tool(n, "", true))}</div>
        </ribbon-panel>
        <ribbon-panel label="Modify" style="width:166px">
          <div class="col c-move">${tool("move", "Move")}${tool("copy", "Copy")}${tool("stretch", "Stretch")}</div>
          <div class="col c-rot">${tool("rotate", "Rotate")}${tool("mirror", "Mirror")}${tool("scale", "Scale")}</div>
          <div class="col c-trim spread">${tool("trim", "Trim", true)}${tool("fillet", "Fillet", true)}${tool("array", "Array", true)}</div>
          <div class="col">${tool("erase")}${tool("explode")}${tool("offset")}</div>
        </ribbon-panel>
        <ribbon-panel label="Annotation" style="width:126px">
          ${big("w28", "text", ["Text"])}${big("w44", "dim", ["Dimension"], false)}
          <div class="col spread c-trim">${tool("linear", "Linear", true)}${tool("leader", "Leader", true)}${tool("table", "Table")}</div>
        </ribbon-panel>
        <ribbon-panel label="Layers" style="width:182px">
          ${big("w40", "layers", ["Layer", "Properties"], false)}
          <div class="col grow">
            <label class="field">${icon("bulb", 10)}${icon("sun", 10)}${icon("lock", 10)}<span class="white"></span><select aria-label="Layer"><option>0</option></select>${caret}</label>
            <div class="row">${["lay1", "lay2", "lay3", "lay4"].map((n) => tool(n))}${tool("current", "Make Current")}</div>
            <div class="row">${["lay5", "lay2", "lay6", "lay7"].map((n) => tool(n))}${tool("match", "Match Layer")}</div>
          </div>
        </ribbon-panel>
        <ribbon-panel label="Block" style="width:107px">
          ${big("w28", "insert", ["Insert"])}
          <div class="col">${tool("create", "Create")}${tool("bedit", "Edit")}${tool("attr", "Edit Attributes", true)}</div>
        </ribbon-panel>
        <ribbon-panel label="Properties" launcher style="width:177px">
          ${big("w40", "matchp", ["Match", "Properties"], false)}
          <div class="col grow">
            <div class="row">${icon("wheel")}<label class="field"><span class="white"></span>${cb("Color")}</label></div>
            <div class="row">${icon("weights")}<label class="field"><span class="stroke ribbon-line"></span>${cb("Lineweight")}</label></div>
            <div class="row">${icon("types")}<label class="field"><span class="stroke ribbon-line"></span>${cb("Linetype")}</label></div>
          </div>
        </ribbon-panel>
        <ribbon-panel label="Groups" style="width:45px">
          ${big("w28", "group", ["Group"], false)}
          <div class="col">${tool("ungroup")}${tool("gedit")}<button class="pressed" aria-label="Group selection">${icon("gsel")}</button></div>
        </ribbon-panel>
        <ribbon-panel label="Utilities" style="width:65px">
          ${big("w48", "measure", ["Measure"])}
          <div class="col">${tool("qsel")}${tool("selall")}${tool("calc")}</div>
        </ribbon-panel>
        <ribbon-panel label="Clipboard" plain style="width:54px">
          ${big("w36", "paste", ["Paste"])}
          <div class="col">${tool("cut")}${tool("pages")}</div>
        </ribbon-panel>
        <ribbon-panel label="View" launcher style="width:42px">${big("w40", "base", ["Base"])}</ribbon-panel>
      </section>
      <nav class="bar files">
        <button class="file">Start</button>
        <button class="file on">ARRECIFE*${icon("close", 8)}</button>
        <button class="plus" aria-label="New drawing">+</button>
      </nav>
      <main class="main">
        <aside class="side">
          <section class="palette props">
            <h2 class="head"><span class="grip"></span>PROPERTIES</h2>
            <div class="props-body">
              <div class="picker">
                <label class="field"><select aria-label="Selection"><option>No selection</option></select>${caret}</label>
                <div class="icons">${["addsel", "selall", "qsel"].map((n) => html`<button aria-label=${n}>${icon(n)}</button>`)}</div>
              </div>
              ${sections.map(([name, rows]) => html`<table class="props-table">
                <colgroup><col class="key" /><col /></colgroup>
                <thead><tr><th colspan="2"><div class="sec">${name}${caret}</div></th></tr></thead>
                <tbody>${rows.map(([k, v, kind]) => html`<tr><th scope="row">${k}</th><td><div class="val ${kind ?? ""}">
                  ${kind === "swatch" ? html`<span class="white"></span>` : kind === "rule" ? html`<span class="stroke"></span>` : nothing}${v}</div></td></tr>`)}</tbody>
              </table>`)}
            </div>
          </section>
          <div class="vtabs"><button class="on">Design</button><button>Object Class</button><button>Display</button></div>
          <section class="palette xrefs">
            <h2 class="head"><span class="grip"></span>EXTERNAL REFERENCES</h2>
            <div class="strip">
              <button aria-label="Attach">${icon("dwg")}</button>${caret}<button aria-label="Refresh">${icon("sync")}</button>${caret}<button aria-label="Change path">${icon("path")}</button>${caret}<button aria-label="Help">${icon("help")}</button>
            </div>
            <div class="box list-box">
              <div>
                <div class="box-head"><span class="name">File References</span>${icon("list", 9)}${icon("tree", 9)}</div>
                <table class="ref-table">
                  <thead><tr><th></th><th><div class="sorted">Reference ...<span class="up"></span></div></th><th>&nbsp;Status</th></tr></thead>
                  <tbody><tr><td>${icon("dwg", 11)}</td><td>ARRECIFE*</td><td>&nbsp;&nbsp;&nbsp;&nbsp;Opened</td></tr></tbody>
                </table>
              </div>
              <div class="hscroll">${icon("prev", 8)}<span class="thumb"></span>${icon("next", 8)}</div>
            </div>
            <span class="splitter"></span>
            <div class="box detail-box"><div class="box-head"><span class="name">Details</span>${icon("detail", 9)}${icon("preview", 9)}&nbsp;${caret}</div></div>
          </section>
        </aside>
        <section class="canvas">
          <pipe-drawing></pipe-drawing>
          <span class="vp">[−][Top][2D Wireframe]</span>
          <div class="tip">Select objects:</div>
          <svg class="ucs" width="54" height="54" viewBox="0 0 54 54" fill="none" stroke="#d5dbe0" aria-hidden="true">
            <path d="M5.500 14v32M8 47.500h31M3 44.500h5.500v6H3z"/><path d="m7 3 4 4.500L15 3M11 7.500V12M42 39l8 8M50 39l-8 8"/>
          </svg>
          <div class="nav">${["circle", "rect", "find", "rotate", "move", "custom"].map((n) => icon(n, 14))}</div>
          <div class="command">
            <div class="handle"><span class="dots"></span>${icon("close", 9)}${icon("wrench", 12)}</div>
            <div class="console">
              <span class="log">Seleccione sistema de tuberias:</span>
              <span class="log mid">Select objects: Specify opposite corner: 25 found, 1 group</span>
              <span class="log new">Select objects:</span>
              <label class="prompt">${icon("prompt", 12)}${dot}<input class="cmd" placeholder="Type a command" aria-label="Command" /><span class="up"></span></label>
            </div>
          </div>
        </section>
      </main>
      <footer class="bar status">
        <div class="sheets"><button class="on">Model</button><button>Layout1</button><button>Layout2</button><button class="add" aria-label="New layout">+</button></div>
        <div class="job"><span>Escribiendo archivo de tabla de cálculo...</span><div class="meter" role="progressbar" aria-label="Escribiendo archivo" aria-valuenow="76"><div class="fill" style="width:76%"></div></div></div>
      </footer>`;
  }
}
